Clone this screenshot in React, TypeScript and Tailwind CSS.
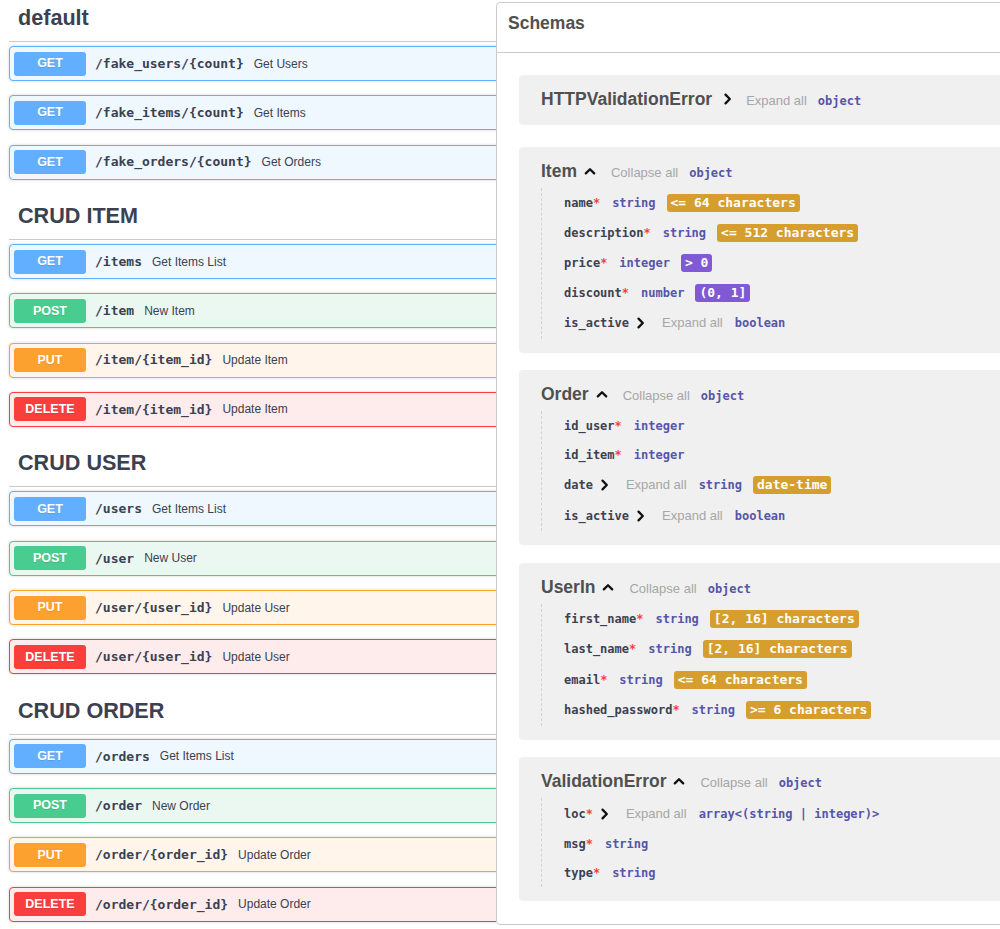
const sans = "font-['Liberation_Sans',Arial,sans-serif]";
const mono = "font-['DejaVu_Sans_Mono',monospace]";

type Method = "GET" | "POST" | "PUT" | "DELETE";

const methodStyles: Record<Method, { row: string; badge: string }> = {
  GET: { row: "border-[#61affe] bg-[#eff7ff]", badge: "bg-[#61affe]" },
  POST: { row: "border-[#49cc90] bg-[#ebf8f1]", badge: "bg-[#49cc90]" },
  PUT: { row: "border-[#fca130] bg-[#fff5ea]", badge: "bg-[#fca130]" },
  DELETE: { row: "border-[#f93e3e] bg-[#feebeb]", badge: "bg-[#f93e3e]" },
};

const sections: { title: string; ops: { method: Method; path: string; summary: string }[] }[] = [
  {
    title: "default",
    ops: [
      { method: "GET", path: "/fake_users/{count}", summary: "Get Users" },
      { method: "GET", path: "/fake_items/{count}", summary: "Get Items" },
      { method: "GET", path: "/fake_orders/{count}", summary: "Get Orders" },
    ],
  },
  {
    title: "CRUD ITEM",
    ops: [
      { method: "GET", path: "/items", summary: "Get Items List" },
      { method: "POST", path: "/item", summary: "New Item" },
      { method: "PUT", path: "/item/{item_id}", summary: "Update Item" },
      { method: "DELETE", path: "/item/{item_id}", summary: "Update Item" },
    ],
  },
  {
    title: "CRUD USER",
    ops: [
      { method: "GET", path: "/users", summary: "Get Items List" },
      { method: "POST", path: "/user", summary: "New User" },
      { method: "PUT", path: "/user/{user_id}", summary: "Update User" },
      { method: "DELETE", path: "/user/{user_id}", summary: "Update User" },
    ],
  },
  {
    title: "CRUD ORDER",
    ops: [
      { method: "GET", path: "/orders", summary: "Get Items List" },
      { method: "POST", path: "/order", summary: "New Order" },
      { method: "PUT", path: "/order/{order_id}", summary: "Update Order" },
      { method: "DELETE", path: "/order/{order_id}", summary: "Update Order" },
    ],
  },
];

type Prop = {
  name: string;
  required?: boolean;
  expand?: boolean;
  type: string;
  badge?: string;
  badgeColor?: string;
  h: string;
};

const gold = "bg-[#d69e2e]";
const purple = "bg-[#805ad5]";

const models: { name: string; open: boolean; props: Prop[]; gap: string }[] = [
  { name: "HTTPValidationError", open: false, props: [], gap: "mb-[21.5px]" },
  {
    name: "Item",
    open: true,
    gap: "mb-[17.5px]",
    props: [
      { name: "name", required: true, type: "string", badge: "<= 64 characters", badgeColor: gold, h: "h-[30px]" },
      { name: "description", required: true, type: "string", badge: "<= 512 characters", badgeColor: gold, h: "h-[30px]" },
      { name: "price", required: true, type: "integer", badge: "> 0", badgeColor: purple, h: "h-[30px]" },
      { name: "discount", required: true, type: "number", badge: "(0, 1]", badgeColor: purple, h: "h-[30px]" },
      { name: "is_active", expand: true, type: "boolean", h: "h-[31px]" },
    ],
  },
  {
    name: "Order",
    open: true,
    gap: "mb-[17.5px]",
    props: [
      { name: "id_user", required: true, type: "integer", h: "h-[29px]" },
      { name: "id_item", required: true, type: "integer", h: "h-[29px]" },
      { name: "date", expand: true, type: "string", badge: "date-time", badgeColor: gold, h: "h-[31px]" },
      { name: "is_active", expand: true, type: "boolean", h: "h-[31px]" },
    ],
  },
  {
    name: "UserIn",
    open: true,
    gap: "mb-[17.5px]",
    props: [
      { name: "first_name", required: true, type: "string", badge: "[2, 16] characters", badgeColor: gold, h: "h-[30px]" },
      { name: "last_name", required: true, type: "string", badge: "[2, 16] characters", badgeColor: gold, h: "h-[31px]" },
      { name: "email", required: true, type: "string", badge: "<= 64 characters", badgeColor: gold, h: "h-[30px]" },
      { name: "hashed_password", required: true, type: "string", badge: ">= 6 characters", badgeColor: gold, h: "h-[31px]" },
    ],
  },
  {
    name: "ValidationError",
    open: true,
    gap: "mb-0",
    props: [
      { name: "loc", required: true, expand: true, type: "array<(string | integer)>", h: "h-[31px]" },
      { name: "msg", required: true, type: "string", h: "h-[29px]" },
      { name: "type", required: true, type: "string", h: "h-[29px]" },
    ],
  },
];

function ChevronRight() {
  return (
    <svg width="14" height="14" viewBox="0 0 14 14" className="shrink-0 self-center">
      <path d="M7.5 2.6 L11.8 7 L7.5 11.4" fill="none" stroke="#111" strokeWidth="2.3" strokeLinecap="round" strokeLinejoin="round" />
    </svg>
  );
}

function ChevronUp() {
  return (
    <svg width="14" height="14" viewBox="0 0 14 14" className="shrink-0 self-center">
      <path d="M2.8 9.4 L7 5.2 L11.2 9.4" fill="none" stroke="#111" strokeWidth="2.3" strokeLinecap="round" strokeLinejoin="round" />
    </svg>
  );
}

function OpRow({ method, path, summary }: { method: Method; path: string; summary: string }) {
  const s = methodStyles[method];
  return (
    <div className={`flex h-[35px] items-center rounded-[4px] border pl-[4px] shadow-[0_0_3px_rgba(0,0,0,0.19)] ${s.row}`}>
      <div
        className={`flex h-[24px] w-[72px] shrink-0 items-center justify-center rounded-[3px] text-[12.5px] font-bold text-white [text-shadow:0_1px_0_rgba(0,0,0,0.1)] ${sans} ${s.badge}`}
      >
        {method}
      </div>
      <span className={`ml-[9px] text-[13px] font-bold text-[#3b4151] ${mono}`}>{path}</span>
      <span className={`ml-[10px] text-[12px] text-[#3b4151] ${sans}`}>{summary}</span>
    </div>
  );
}

function PropRow({ p }: { p: Prop }) {
  return (
    <div className={`flex items-center ${p.h}`}>
      <div className="flex items-baseline">
        <span className={`text-[12px] font-bold text-[#3b4151] ${mono}`}>
          {p.name}
          {p.required && <span className="text-[#f93e3e]">*</span>}
        </span>
        {p.expand && (
          <>
            <span className="ml-[2px] self-center">
              <ChevronRight />
            </span>
            <span className={`ml-[17px] text-[13px] text-[#a6a6a6] ${sans}`}>Expand all</span>
          </>
        )}
        <span className={`ml-[12px] text-[12px] font-bold text-[#55a] ${mono}`}>{p.type}</span>
        {p.badge && (
          <span className={`ml-[11px] rounded-[3px] px-[4px] text-[13px] leading-[18px] font-bold text-white ${mono} ${p.badgeColor}`}>
            {p.badge}
          </span>
        )}
      </div>
    </div>
  );
}

export default function App() {
  return (
    <div className="flex h-[929px] w-[1000px] overflow-hidden bg-white">
      {/* operations list */}
      <div className="w-[496px] shrink-0 overflow-hidden">
        <div className="w-[640px] pl-[9px]">
          {sections.map((sec, i) => (
            <div key={sec.title} className={i === 0 ? "" : "mt-[18.5px]"}>
              <div className="h-[42px] border-b border-[#c9cacd]">
                <h3 className={`pl-[9px] pt-[6px] text-[21.6px] leading-[24px] font-bold text-[#3b4151] ${sans}`}>{sec.title}</h3>
              </div>
              <div className="mt-[4px] flex flex-col gap-[14.3px]">
                {sec.ops.map((op, j) => (
                  <OpRow key={j} {...op} />
                ))}
              </div>
            </div>
          ))}
        </div>
      </div>

      {/* schemas panel */}
      <div className="mt-[2px] w-[560px] shrink-0 self-start rounded-[4px] border border-[#cbcbcb] bg-white">
        <div className="h-[50px] border-b border-[#cbcbcb] pl-[11px] pt-[8px]">
          <h4 className={`text-[17.5px] leading-[24px] font-bold text-[#505050] ${sans}`}>Schemas</h4>
        </div>
        <div className="pt-[22px] pb-[23px]">
          {models.map((m) => (
            <div key={m.name} className={`ml-[22px] rounded-[4px] bg-[#f0f0f0] pl-[22px] pt-[12px] pb-[14px] ${m.gap}`}>
              <div className="flex h-[24px] items-baseline">
                <span className={`text-[17.5px] leading-[24px] font-bold text-[#505050] ${sans}`}>{m.name}</span>
                <span className="ml-[6px] self-center">{m.open ? <ChevronUp /> : <ChevronRight />}</span>
                <span className={`ml-[14px] text-[13px] text-[#a6a6a6] ${sans}`}>{m.open ? "Collapse all" : "Expand all"}</span>
                <span className={`ml-[11px] text-[12px] font-bold text-[#55a] ${mono}`}>object</span>
              </div>
              {m.props.length > 0 && (
                <div className="mt-[5px] border-l border-dashed border-[#d2d2d2] pl-[22px]">
                  {m.props.map((p) => (
                    <PropRow key={p.name} p={p} />
                  ))}
                </div>
              )}
            </div>
          ))}
        </div>
      </div>
    </div>
  );
}
